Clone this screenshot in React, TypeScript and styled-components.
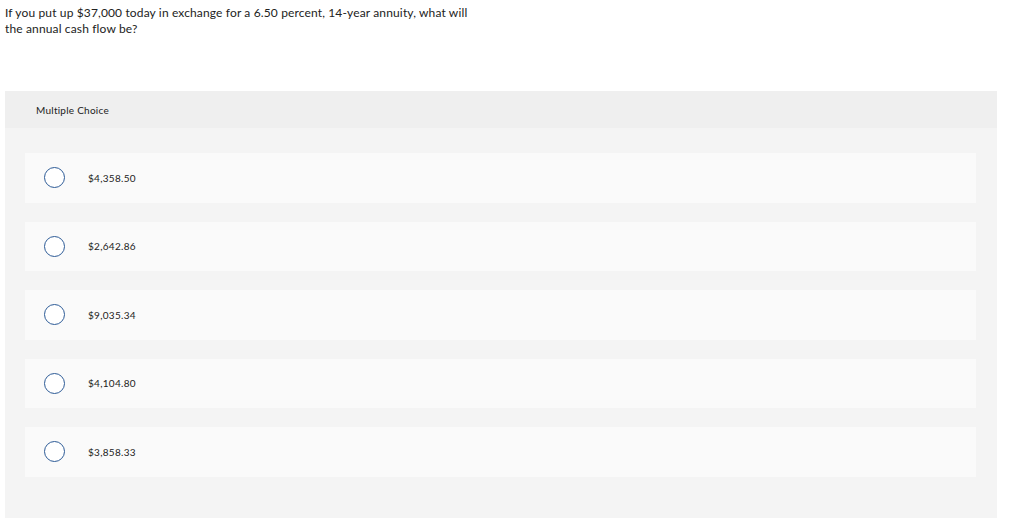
import React from "react";
import styled, { createGlobalStyle } from "styled-components";

const Global = createGlobalStyle`
  html, body { margin: 0; padding: 0; background: #ffffff; }
  body { font-family: Lato, "Open Sans", sans-serif; color: #333333; }
`;

const Page = styled.div`
  padding: 5px 27px 0 5px;
`;

const Question = styled.p`
  margin: 0;
  font-size: 12px;
  line-height: 16px;
  letter-spacing: 0.14px;
  color: #222222;
  width: 472px;
`;

const Panel = styled.section`
  margin-top: 54px;
  background: #f4f4f4;
  padding-bottom: 41.5px;
`;

const Header = styled.div`
  background: #efefef;
  height: 37px;
  display: flex;
  align-items: center;
  padding-left: 31px;
  font-size: 10px;
  letter-spacing: 0.25px;
  color: #222222;
`;

const List = styled.div`
  display: flex;
  flex-direction: column;
  gap: 19px;
  padding: 25px 21px 0 20px;
`;

const Row = styled.label`
  display: flex;
  align-items: center;
  height: 49.5px;
  background: #fafafa;
  padding-left: 19px;
  font-size: 10px;
  letter-spacing: 0.3px;
  color: #222222;
`;

const Radio = styled.span`
  width: 19px;
  height: 19px;
  border: 1px solid #2c5a96;
  border-radius: 50%;
  background: #ffffff;
  flex: none;
  margin-right: 23px;
`;

const options = ["$4,358.50", "$2,642.86", "$9,035.34", "$4,104.80", "$3,858.33"];

export default function App() {
  return (
    <Page>
      <Global />
      <Question>
        If you put up $37,000 today in exchange for a 6.50 percent, 14-year annuity, what will the
        annual cash flow be?
      </Question>
      <Panel>
        <Header>Multiple Choice</Header>
        <List>
          {options.map((o) => (
            <Row key={o}>
              <Radio />
              {o}
            </Row>
          ))}
        </List>
      </Panel>
    </Page>
  );
}
